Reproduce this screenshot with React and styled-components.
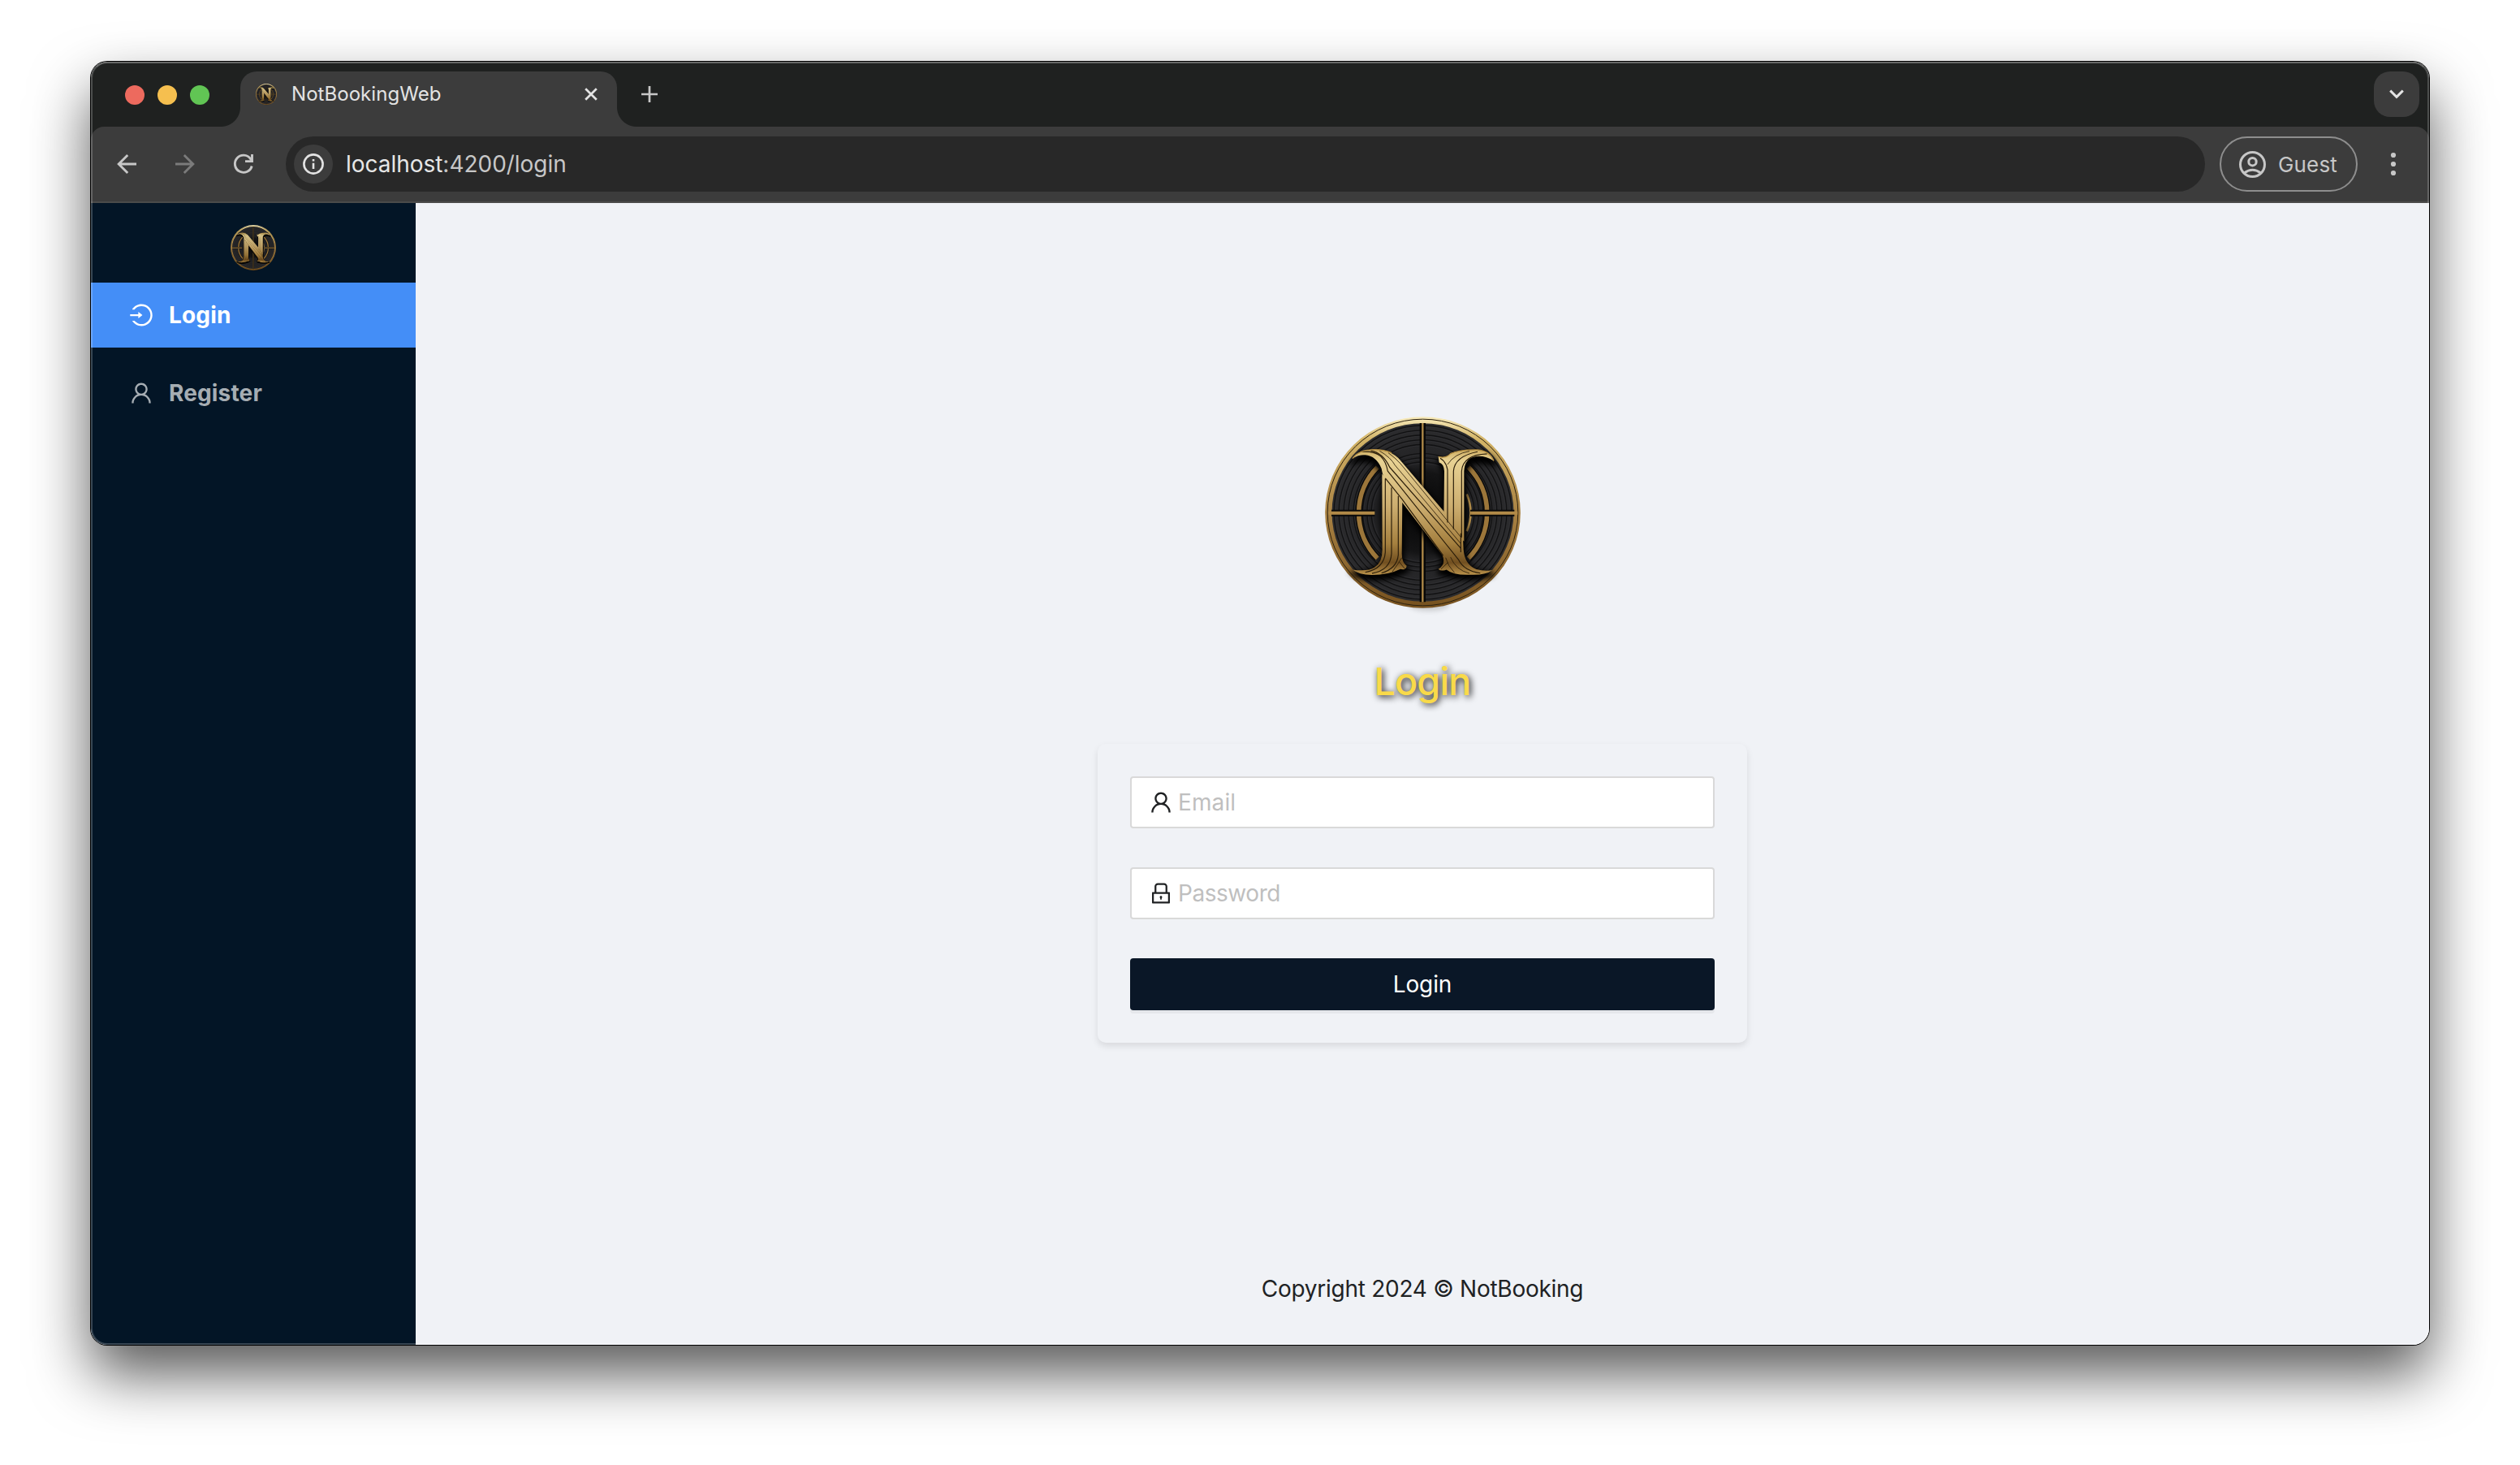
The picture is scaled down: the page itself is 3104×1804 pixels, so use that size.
import React, { useId } from "react";
import styled, { createGlobalStyle } from "styled-components";
import { AiOutlineLock, AiOutlineLogin, AiOutlineUser } from "react-icons/ai";

const GlobalStyle = createGlobalStyle`
  *, *::before, *::after { box-sizing: border-box; }
  body {
    margin: 0;
    background: #fff;
    font-family: Inter, "Liberation Sans", sans-serif;
  }
  svg { display: block; flex: none; }
`;

const Desktop = styled.div`
  width: 3104px;
  height: 1804px;
  padding: 76px 112px 148px;
  overflow: hidden;
`;

const BrowserWindow = styled.div`
  position: relative;
  display: flex;
  flex-direction: column;
  height: 1580px;
  border-radius: 20px;
  box-shadow: 0 0 0 1px #000, 0 36px 72px rgba(0, 0, 0, 0.66);

  &::after {
    content: "";
    position: absolute;
    inset: 0;
    border: 2px solid rgba(255, 255, 255, 0.21);
    border-top-color: rgba(255, 255, 255, 0.32);
    border-radius: 20px;
    pointer-events: none;
  }
`;

const Chrome = styled.header`
  flex: none;
  background: #1f2120;
  border-radius: 20px 20px 0 0;
`;

const TabStrip = styled.div`
  display: flex;
  height: 80px;
  padding: 12px 12px 0 42px;
`;

const TrafficLights = styled.div`
  display: flex;
  gap: 16px;
  padding-top: 17px;
  width: 142px;
`;

const Light = styled.span`
  width: 24px;
  height: 24px;
  border-radius: 50%;
  background: ${({ $color }) => $color};
`;

const Tab = styled.div`
  position: relative;
  display: flex;
  align-items: center;
  width: 464px;
  height: 68px;
  padding: 0 24px 12px 19px;
  background: #3c3c3c;
  border-radius: 20px 20px 0 0;
  color: #e3e3e3;

  &::before,
  &::after {
    content: "";
    position: absolute;
    bottom: 0;
    width: 24px;
    height: 24px;
  }
  &::before {
    right: 100%;
    background: radial-gradient(circle at 0 0, transparent 23.5px, #3c3c3c 24.5px);
  }
  &::after {
    left: 100%;
    background: radial-gradient(circle at 100% 0, transparent 23.5px, #3c3c3c 24.5px);
  }
`;

const TabTitle = styled.span`
  flex: 1;
  margin-left: 18px;
  padding-bottom: 2px;
  font-size: 24px;
  letter-spacing: 0.05px;
`;

const NewTab = styled.div`
  display: flex;
  align-items: center;
  height: 56px;
  margin-left: 30px;
  flex: 1;
`;

const TabSearch = styled.div`
  display: flex;
  align-items: center;
  justify-content: center;
  width: 56px;
  height: 56px;
  border-radius: 20px;
  background: #3c3c3c;
`;

const Toolbar = styled.div`
  display: flex;
  align-items: center;
  height: 94px;
  padding: 0 40px 0 28px;
  background: #3c3c3c;
  border-bottom: 2px solid #4b4b4a;
  border-radius: 16px 16px 0 0;
`;

const NavButtons = styled.div`
  display: flex;
  gap: 40px;
  width: 212px;
`;

const AddressBar = styled.div`
  display: flex;
  align-items: center;
  flex: 1;
  height: 68px;
  padding-left: 10px;
  border-radius: 34px;
  background: #282828;
`;

const SiteInfo = styled.span`
  display: flex;
  align-items: center;
  justify-content: center;
  width: 48px;
  height: 48px;
  border-radius: 50%;
  background: #3c3c3c;
`;

const Url = styled.span`
  margin-left: 16px;
  font-size: 28px;
  letter-spacing: -0.03px;
  color: #c7c7c7;
`;

const Host = styled.span`
  color: #e6e6e6;
`;

const Profile = styled.div`
  display: flex;
  align-items: center;
  gap: 15px;
  width: 170px;
  height: 68px;
  margin: 0 40px 0 18px;
  padding-left: 22px;
  border: 2px solid #8e8e8e;
  border-radius: 34px;
  color: #c7c7c7;
  font-size: 26px;
  letter-spacing: 0.15px;
`;

const Page = styled.div`
  display: flex;
  flex: 1;
  border-radius: 0 0 20px 20px;
  overflow: hidden;
  background: #f0f2f6;
`;

const Sidebar = styled.nav`
  width: 400px;
  background: #031526;
`;

const SidebarLogo = styled.div`
  display: flex;
  justify-content: center;
  height: 98px;
  padding-top: 27px;
`;

const MenuItem = styled.div`
  display: flex;
  align-items: center;
  gap: 18px;
  height: 80px;
  margin-bottom: 16px;
  padding-left: 46px;
  font-size: 28px;
  font-weight: 700;
  letter-spacing: 0.15px;
  color: ${({ $active }) => ($active ? "#fff" : "#a6adb3")};
  background: ${({ $active }) => ($active ? "#448ef7" : "transparent")};
`;

const Main = styled.main`
  display: flex;
  flex: 1;
  flex-direction: column;
  align-items: center;
  padding: 263px 0 47px;
`;

const Heading = styled.h1`
  margin: 62px 0 49px;
  font-size: 46.8px;
  line-height: 56px;
  font-weight: 500;
  letter-spacing: -0.9px;
  color: #f9da49;
  text-shadow: 2px 2px 8px #000;
`;

const Card = styled.form`
  display: flex;
  flex-direction: column;
  gap: 48px;
  width: 800px;
  padding: 40px;
  border-radius: 10px;
  box-shadow: 0 4px 8px rgba(0, 0, 0, 0.1);
`;

const Field = styled.label`
  display: flex;
  align-items: center;
  gap: 5px;
  height: 64px;
  padding: 0 20px;
  border: 2px solid #d9d9d9;
  border-radius: 4px;
  background: #fff;
  color: #202224;
`;

const Input = styled.input`
  flex: 1;
  min-width: 0;
  padding: 0;
  border: 0;
  outline: 0;
  background: transparent;
  font: 28px Inter, "Liberation Sans", sans-serif;
  letter-spacing: ${({ $tracking }) => $tracking}px;

  &::placeholder {
    color: #bfbfbf;
    opacity: 1;
  }
`;

const Submit = styled.button`
  height: 64px;
  padding: 0;
  border: 0;
  border-radius: 4px;
  background: #0a1727;
  box-shadow: 0 4px 0 rgba(0, 0, 0, 0.043);
  color: #fff;
  font: 28px Inter, "Liberation Sans", sans-serif;
  letter-spacing: -0.1px;
`;

const Footer = styled.footer`
  margin-top: auto;
  font-size: 28px;
  line-height: 44px;
  letter-spacing: -0.27px;
  color: #202224;
`;

const grooves = [328, 310, 292, 274, 256, 222, 206, 190];

function Emblem({ width, height }) {
  const id = useId().replace(/[^a-zA-Z0-9]/g, "");
  const gold = `gold${id}`;
  const rim = `rim${id}`;
  const disc = `disc${id}`;
  const soft = `soft${id}`;
  return (
    <svg width={width} height={height} viewBox="66 38 723 709" preserveAspectRatio="none" overflow="visible">
      <defs>
        <linearGradient id={rim} x1="0" y1="0" x2="0" y2="1">
          <stop offset="0" stopColor="#f8ebbb" />
          <stop offset="0.12" stopColor="#d3b467" />
          <stop offset="0.5" stopColor="#a98243" />
          <stop offset="1" stopColor="#76511f" />
        </linearGradient>
        <linearGradient id={gold} gradientUnits="userSpaceOnUse" x1="0" y1="155" x2="0" y2="625">
          <stop offset="0" stopColor="#c9a75a" />
          <stop offset="0.1" stopColor="#e8d293" />
          <stop offset="0.45" stopColor="#cdae70" />
          <stop offset="0.75" stopColor="#a5803f" />
          <stop offset="0.9" stopColor="#714f20" />
          <stop offset="1" stopColor="#bd954c" />
        </linearGradient>
        <radialGradient id={disc}>
          <stop offset="0" stopColor="#050505" />
          <stop offset="0.45" stopColor="#141415" />
          <stop offset="0.55" stopColor="#232325" />
          <stop offset="1" stopColor="#2c2c2e" />
        </radialGradient>
        <filter id={soft} x="-20%" y="-40%" width="140%" height="180%">
          <feGaussianBlur stdDeviation="10" />
        </filter>
      </defs>
      <ellipse cx="450" cy="732" rx="75" ry="24" fill="#000" opacity="0.16" filter={`url(#${soft})`} />
      <ellipse cx="427.5" cy="392.5" rx="361" ry="354" fill={`url(#${rim})`} />
      <ellipse cx="427.5" cy="392.5" rx="352" ry="345" fill="none" stroke="#2c210f" strokeWidth="3" />
      <ellipse cx="427.5" cy="392.5" rx="336" ry="330" fill={`url(#${disc})`} />
      <g fill="none">
        {grooves.map((r) => (
          <g key={r}>
            <ellipse cx="427.5" cy="392.5" rx={r} ry={r * 0.98} stroke="#111112" strokeWidth="4" />
            <ellipse cx="427.5" cy="392.5" rx={r - 4} ry={r * 0.98 - 4} stroke="#353538" strokeWidth="1.5" />
          </g>
        ))}
        <path d="M260 225A240 240 0 0 0 260 562M596 225A240 240 0 0 1 596 562" stroke="#0a0a0a" strokeWidth="26" />
        <path d="M260 225A240 240 0 0 0 260 562M596 225A240 240 0 0 1 596 562" stroke="#9c763a" strokeWidth="17" />
        <path d="M590 325A175 175 0 0 1 590 462" stroke="#bd954d" strokeWidth="8" />
        <path d="M90 395H250M603 395H766" stroke="#0a0a0a" strokeWidth="24" />
        <path d="M78 395H250M603 395H778" stroke="#b28a47" strokeWidth="12" />
        <path d="M427 62V724" stroke="#070707" strokeWidth="22" />
        <path d="M427 62V724" stroke="#b08a49" strokeWidth="7" />
      </g>
      <g fill="#000" stroke="#000" strokeWidth="14" filter={`url(#${soft})`} transform="translate(3 14)">
        <path d="M280 255L352 345L350 545Q350 580 368 592L345 604Q300 624 240 624Q190 622 168 604Q280 600 280 530Z" />
        <path d="M485 186Q512 194 530 175Q560 160 630 161Q680 165 690 202Q582 170 580 240V500L505 425V240Z" />
        <path d="M168 193Q190 160 250 160Q310 160 345 200L575 470L578 530Q582 600 685 606Q600 640 485 602L500 550L290 275Q265 160 168 193Z" />
      </g>
      <g fill={`url(#${gold})`}>
        <path d="M277 250L352 345L350 545Q350 578 368 590Q366 608 345 602Q300 624 240 624Q190 622 168 604Q225 612 250 595Q278 578 278 530Z" />
        <path d="M485 186Q512 194 530 175Q560 160 630 161Q680 165 690 202Q660 182 625 185Q582 190 580 240V500L505 425L507 240Q505 212 488 208Z" />
        <path d="M168 193Q190 160 250 160Q310 160 345 200L575 470L578 530Q582 585 625 603Q660 612 685 606Q660 626 600 623Q540 625 515 604Q495 612 485 602Q514 585 500 550L290 275Q280 260 275 230Q255 183 215 180Q190 178 168 193Z" />
      </g>
      <g fill="none" stroke="#2a1d0a" strokeWidth="3.5" strokeLinejoin="round">
        <path d="M289 266L352 345L503 552" />
        <path d="M289 268V540Q285 600 215 614" />
        <path d="M312 300V545Q308 606 240 618" />
        <path d="M337 332V550Q332 600 275 617" />
        <path d="M350 560Q335 585 315 612M340 575L362 602" strokeWidth="2.5" />
        <path d="M200 168Q250 165 272 185Q292 205 298 240L560 568Q580 608 640 617" />
        <path d="M235 164Q280 172 305 225L568 525" />
        <path d="M268 165Q310 190 325 218L568 508" strokeWidth="2.5" />
        <path d="M300 172Q325 190 345 212L570 486" strokeWidth="2.5" />
        <path d="M530 558Q550 606 600 618M512 560Q520 590 545 616M495 602L520 578" strokeWidth="2.5" />
        <path d="M568 470V540" />
        <path d="M519 430V235Q514 205 492 192M541 455V240Q545 185 630 168M571 485V240Q575 180 665 176" />
        <path d="M519 215Q545 175 600 166" strokeWidth="2.5" />
      </g>
      <path d="M168 193Q190 160 250 160Q285 160 312 172M485 186Q512 194 530 175Q560 160 630 161Q675 165 690 202" fill="none" stroke="#b18b41" strokeWidth="4" />
    </svg>
  );
}

const ArrowIcon = ({ flip, color }) => (
  <svg width="32" height="32" viewBox="0 0 32 32" fill="none" stroke={color} strokeWidth="2.9">
    <g transform={flip ? "matrix(-1 0 0 1 32 0)" : undefined}>
      <path d="M28 16H6.5M17.2 5L6.2 16L17.2 27" />
    </g>
  </svg>
);

const ReloadIcon = () => (
  <svg width="32" height="32" viewBox="0 0 32 32" fill="none" stroke="#c7c7c7" strokeWidth="2.9">
    <path d="M26.2 18.5A10.6 10.6 0 1 1 24.6 9.6L26 11.6" />
    <path d="M26.5 4V12.6H18" />
  </svg>
);

const InfoIcon = () => (
  <svg width="26" height="26" viewBox="0 0 26 26" fill="none" stroke="#e3e3e3" strokeWidth="2.6">
    <circle cx="13" cy="13" r="11.6" />
    <path d="M13 11.8V19M13 7V9.6" />
  </svg>
);

const CloseIcon = () => (
  <svg width="16" height="16" viewBox="0 0 16 16" fill="none" stroke="#e3e3e3" strokeWidth="2.7">
    <path d="M1.2 1.2L14.8 14.8M14.8 1.2L1.2 14.8" />
  </svg>
);

const PlusIcon = () => (
  <svg width="20" height="20" viewBox="0 0 20 20" fill="none" stroke="#c7c7c7" strokeWidth="2.7">
    <path d="M10 0V20M0 10H20" />
  </svg>
);

const ChevronIcon = () => (
  <svg width="18" height="12" viewBox="0 0 18 12" fill="none" stroke="#e3e3e3" strokeWidth="3">
    <path d="M1.2 1.6L9 9.3L16.8 1.6" />
  </svg>
);

const AccountIcon = () => (
  <svg width="33" height="33" viewBox="0 0 33 33" fill="none" stroke="#c7c7c7" strokeWidth="3">
    <circle cx="16.5" cy="16.5" r="15" />
    <circle cx="16.5" cy="13.2" r="4.7" />
    <path d="M6.4 27Q16.5 19.6 26.6 27" />
  </svg>
);

const MoreIcon = () => (
  <svg width="8" height="30" viewBox="0 0 8 30" fill="#c7c7c7">
    <circle cx="4" cy="4" r="3.1" />
    <circle cx="4" cy="15" r="3.1" />
    <circle cx="4" cy="26" r="3.1" />
  </svg>
);

export default function App() {
  return (
    <Desktop>
      <GlobalStyle />
      <BrowserWindow>
        <Chrome>
          <TabStrip>
            <TrafficLights>
              <Light $color="#ed6a5e" />
              <Light $color="#f5bf4f" />
              <Light $color="#61c554" />
            </TrafficLights>
            <Tab>
              <Emblem width={26} height={26} />
              <TabTitle>NotBookingWeb</TabTitle>
              <CloseIcon />
            </Tab>
            <NewTab>
              <PlusIcon />
            </NewTab>
            <TabSearch>
              <ChevronIcon />
            </TabSearch>
          </TabStrip>
          <Toolbar>
            <NavButtons>
              <ArrowIcon color="#c7c7c7" />
              <ArrowIcon color="#7b7b7b" flip />
              <ReloadIcon />
            </NavButtons>
            <AddressBar>
              <SiteInfo>
                <InfoIcon />
              </SiteInfo>
              <Url>
                <Host>localhost</Host>:4200/login
              </Url>
            </AddressBar>
            <Profile>
              <AccountIcon />
              Guest
            </Profile>
            <MoreIcon />
          </Toolbar>
        </Chrome>
        <Page>
          <Sidebar>
            <SidebarLogo>
              <Emblem width={56} height={56} />
            </SidebarLogo>
            <MenuItem $active>
              <AiOutlineLogin size={32} />
              Login
            </MenuItem>
            <MenuItem>
              <AiOutlineUser size={32} />
              Register
            </MenuItem>
          </Sidebar>
          <Main>
            <Emblem width={241} height={236} />
            <Heading>Login</Heading>
            <Card>
              <Field>
                <AiOutlineUser size={32} />
                <Input placeholder="Email" $tracking={0.1} />
              </Field>
              <Field>
                <AiOutlineLock size={32} />
                <Input type="password" placeholder="Password" $tracking={-0.45} />
              </Field>
              <Submit type="button">Login</Submit>
            </Card>
            <Footer>Copyright 2024 © NotBooking</Footer>
          </Main>
        </Page>
      </BrowserWindow>
    </Desktop>
  );
}
